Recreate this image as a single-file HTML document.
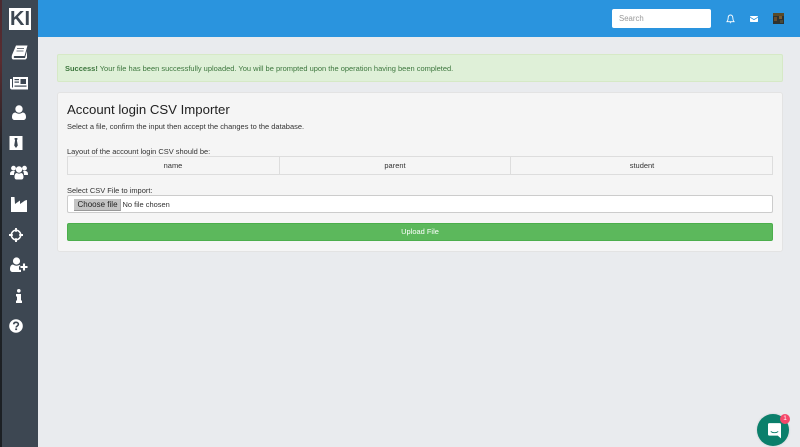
<!DOCTYPE html>
<html>
<head>
<meta charset="utf-8">
<style>
html,body{margin:0;padding:0;width:800px;height:447px;overflow:hidden;background:#e9ebee;font-family:"Liberation Sans",sans-serif;color:#333}
.a{position:absolute;box-sizing:border-box}
.t{position:absolute;white-space:nowrap;font-size:7.47px;line-height:10px;color:#333}
svg{position:absolute;display:block}
</style>
</head>
<body>
<div class="a" style="left:0;top:0;width:2px;height:447px;background:linear-gradient(#4a2a30 0,#5a2c30 60px,#1f2226 150px,#1c2024 447px)"></div>
<div class="a" style="left:2px;top:0;width:36px;height:447px;background:#3d4752"></div>
<div class="a" style="left:38px;top:0;width:762px;height:37px;background:#2a94de"></div>

<!-- logo -->
<div class="a" style="left:9px;top:8px;width:22px;height:22px;background:#fff"></div>
<div class="t" style="left:10px;top:9px;width:20px;height:20px;font-size:20px;line-height:20px;font-weight:bold;color:#3d4752;text-align:center">KI</div>

<!-- book -->
<svg style="left:11px;top:45px" width="17" height="15" viewBox="0 0 17 15"><path d="M5 .5h11.5l-3 10.5H3.5C2.5 11 2.500 13 3.500 13h10.500l2-7v7l-1.500 1.500H2.500C.5 14.500.5 12 1 10z" fill="#fff"/><path d="M6 3.500h7M5.500 6h7" stroke="#3d4752" stroke-width=".8"/></svg>
<!-- newspaper -->
<svg style="left:10px;top:76px" width="18" height="14" viewBox="0 0 18 14"><path d="M3 1h15v12.500H2C.8 13.500 0 12.800 0 11.500V3h2v8.500h1z" fill="#fff"/><rect x="10.500" y="3" width="5.500" height="5" fill="#3d4752"/><rect x="4.500" y="3" width="4.500" height="1.200" fill="#3d4752"/><rect x="4.500" y="5.500" width="4.500" height="1.200" fill="#3d4752"/><rect x="4.500" y="9.500" width="12" height="1.200" fill="#3d4752"/></svg>
<!-- user -->
<svg style="left:12px;top:105px" width="14" height="15" viewBox="0 0 14 15"><circle cx="7" cy="4" r="3.700" fill="#fff"/><path d="M0 12c0-3 1.500-4.500 3.500-4.500 1 .8 2.200 1.200 3.500 1.200s2.500-.4 3.500-1.200c2 0 3.500 1.500 3.500 4.500 0 1.800-1 3-2.500 3h-9C1 15 0 13.800 0 12z" fill="#fff"/></svg>
<!-- id/tie -->
<svg style="left:9px;top:136px" width="14" height="14" viewBox="0 0 14 14"><rect x=".5" width="13" height="14" fill="#fff"/><path d="M5.600 2h2.800v1.400l-.5.8.9 5.300L7 12 5.200 9.500l.9-5.300-.5-.8z" fill="#3d4752"/></svg>
<!-- group -->
<svg style="left:10px;top:165px" width="18" height="15" viewBox="0 0 18 15"><circle cx="3.500" cy="3.200" r="2.400" fill="#fff"/><circle cx="14.500" cy="3.200" r="2.400" fill="#fff"/><circle cx="9" cy="4.500" r="3.200" fill="#fff"/><path d="M0 9.500C0 7 1 6 2.500 6H5C4.400 7 4 8 4 10H.8C.3 10 0 10 0 9.500zM18 9.500C18 7 17 6 15.500 6H13c.6 1 1 2 1 4h3.200c.5 0 .8 0 .8-.5z" fill="#fff"/><path d="M4.500 12c0-2.500 1-4 2.500-4 .6.400 1.300.6 2 .6s1.400-.2 2-.6c1.500 0 2.500 1.500 2.500 4 0 1.500-.8 2.500-2 2.500H6.500c-1.200 0-2-1-2-2.500z" fill="#fff"/></svg>
<!-- factory -->
<svg style="left:11px;top:197px" width="16" height="15" viewBox="0 0 16 15"><path d="M0 0h3.500l.5 7 5-3.500V7l5-3.500 2-.5V15H0z" fill="#fff"/></svg>
<!-- crosshair -->
<svg style="left:9px;top:228px" width="14" height="14" viewBox="0 0 14 14" fill="none"><circle cx="7" cy="7" r="4.700" stroke="#fff" stroke-width="1.500"/><path d="M7 0v3.800M7 10.200V14M0 7h3.800M10.200 7H14" stroke="#fff" stroke-width="1.900"/></svg>
<!-- user plus -->
<svg style="left:10px;top:257px" width="18" height="15" viewBox="0 0 18 15"><circle cx="6.500" cy="4" r="3.600" fill="#fff"/><path d="M0 12c0-3 1.500-4.500 3-4.500 1 .8 2.200 1.200 3.500 1.200 1 0 2-.3 2.800-.8.500.3 1 .8 1.200 1.300H9v3.600h2V15H2.500C1 15 0 13.800 0 12z" fill="#fff"/><path d="M14 6.500v7M10.500 10h7" stroke="#fff" stroke-width="2.100"/></svg>
<!-- info -->
<svg style="left:15px;top:289px" width="8" height="14" viewBox="0 0 8 14"><circle cx="3.800" cy="1.800" r="1.800" fill="#fff"/><path d="M1 5h5v6.500h1V14H1v-2.500h1V7.500H1z" fill="#fff"/></svg>
<!-- question -->
<svg style="left:9px;top:319px" width="14" height="14" viewBox="0 0 14 14"><circle cx="7" cy="7" r="6.800" fill="#fff"/><path d="M4.700 5.300C4.800 4 5.800 3.300 7 3.300c1.300 0 2.400.8 2.400 2 0 1.700-2.200 1.700-2.200 3.200" fill="none" stroke="#3d4752" stroke-width="1.600"/><rect x="6.200" y="9.400" width="1.900" height="1.700" fill="#3d4752"/></svg>

<!-- top bar -->
<div class="a" style="left:612px;top:9px;width:99px;height:19px;background:#fff;border-radius:2px"></div>
<div class="t" style="left:619px;top:14px;color:#999;font-size:7.800px">Search</div>
<svg style="left:726px;top:14px" width="9" height="10" viewBox="0 0 9 10"><path d="M4.500 1C3 1 2.200 2.200 2.200 3.800c0 2.200-.4 2.900-1.200 3.900h7C7.200 6.700 6.800 6 6.800 3.800 6.800 2.200 6 1 4.500 1z" fill="none" stroke="#fff" stroke-width=".9"/><path d="M3.500 8.300h2L4.500 9.500z" fill="#fff"/></svg>
<svg style="left:750px;top:16px" width="8" height="6" viewBox="0 0 8 6"><rect width="8" height="6" rx=".8" fill="#fff"/><path d="M0 1.200l4 2.400 4-2.400" fill="none" stroke="#2a94de" stroke-width=".8"/></svg>
<svg style="left:773px;top:13px" width="11" height="11" viewBox="0 0 11 11"><rect width="11" height="11" fill="#2e3230"/><rect width="11" height="3" fill="#5a4a28"/><rect x="1" y="4" width="3" height="4" fill="#6a4c2a"/><rect x="6" y="3" width="3" height="3" fill="#7a5a30"/><rect x="7" y="7" width="3" height="3" fill="#4a4a3a"/></svg>

<!-- alert -->
<div class="a" style="left:57px;top:54px;width:726px;height:28px;background:#dff0d8;border:1px solid #d6e9c6;border-radius:2px"></div>
<div class="t" style="left:65px;top:64px;color:#3c763d"><b>Success!</b> Your file has been successfully uploaded. You will be prompted upon the operation having been completed.</div>

<!-- panel -->
<div class="a" style="left:57px;top:92px;width:726px;height:160px;background:#f5f5f5;border:1px solid #e3e3e3;border-radius:3px"></div>
<div class="t" style="left:67px;top:102px;font-size:13.200px;line-height:16px;color:#222">Account login CSV Importer</div>
<div class="t" style="left:67px;top:122px">Select a file, confirm the input then accept the changes to the database.</div>
<div class="t" style="left:67px;top:147px">Layout of the account login CSV should be:</div>

<div class="a" style="left:67px;top:156px;width:706px;height:19px;border:1px solid #ddd"></div>
<div class="a" style="left:279px;top:156px;width:1px;height:19px;background:#ddd"></div>
<div class="a" style="left:510px;top:156px;width:1px;height:19px;background:#ddd"></div>
<div class="t" style="left:67px;top:161px;width:212px;text-align:center">name</div>
<div class="t" style="left:280px;top:161px;width:230px;text-align:center">parent</div>
<div class="t" style="left:511px;top:161px;width:262px;text-align:center">student</div>

<div class="t" style="left:67px;top:186px">Select CSV File to import:</div>
<div class="a" style="left:67px;top:195px;width:706px;height:18px;background:#fff;border:1px solid #ccc;border-radius:2px"></div>
<div class="a" style="left:74px;top:199px;width:47px;height:12px;background:#c4c4c4;border-bottom:1px solid #999;border-right:1px solid #aaa"></div>
<div class="t" style="left:77.500px;top:200px;color:#222;font-size:8px">Choose file</div>
<div class="t" style="left:122.500px;top:200px">No file chosen</div>

<div class="a" style="left:67px;top:223px;width:706px;height:18px;background:#5cb85c;border:1px solid #4cae4c;border-radius:2px"></div>
<div class="t" style="left:67px;top:227px;width:706px;text-align:center;color:#fff">Upload File</div>

<!-- chat -->
<div class="a" style="left:757px;top:414px;width:32px;height:32px;border-radius:50%;background:#0b7f6b;box-shadow:0 0 2px rgba(0,0,0,.15)"></div>
<svg style="left:767.500px;top:423px" width="13" height="16" viewBox="0 0 14 17"><path d="M1.500 0h11A1.500 1.500 0 0 1 14 1.500V16.500L10.500 13.500H1.500A1.500 1.500 0 0 1 0 12V1.500A1.500 1.500 0 0 1 1.500 0z" fill="#fff"/><path d="M3 9c2.300 1.800 5.700 1.800 8 0" fill="none" stroke="#0b7f6b" stroke-width="1"/></svg>
<div class="a" style="left:780px;top:414px;width:10px;height:10px;border-radius:50%;background:#f5476a;color:#fff;font-size:6.500px;line-height:10px;text-align:center">1</div>
</body>
</html>
